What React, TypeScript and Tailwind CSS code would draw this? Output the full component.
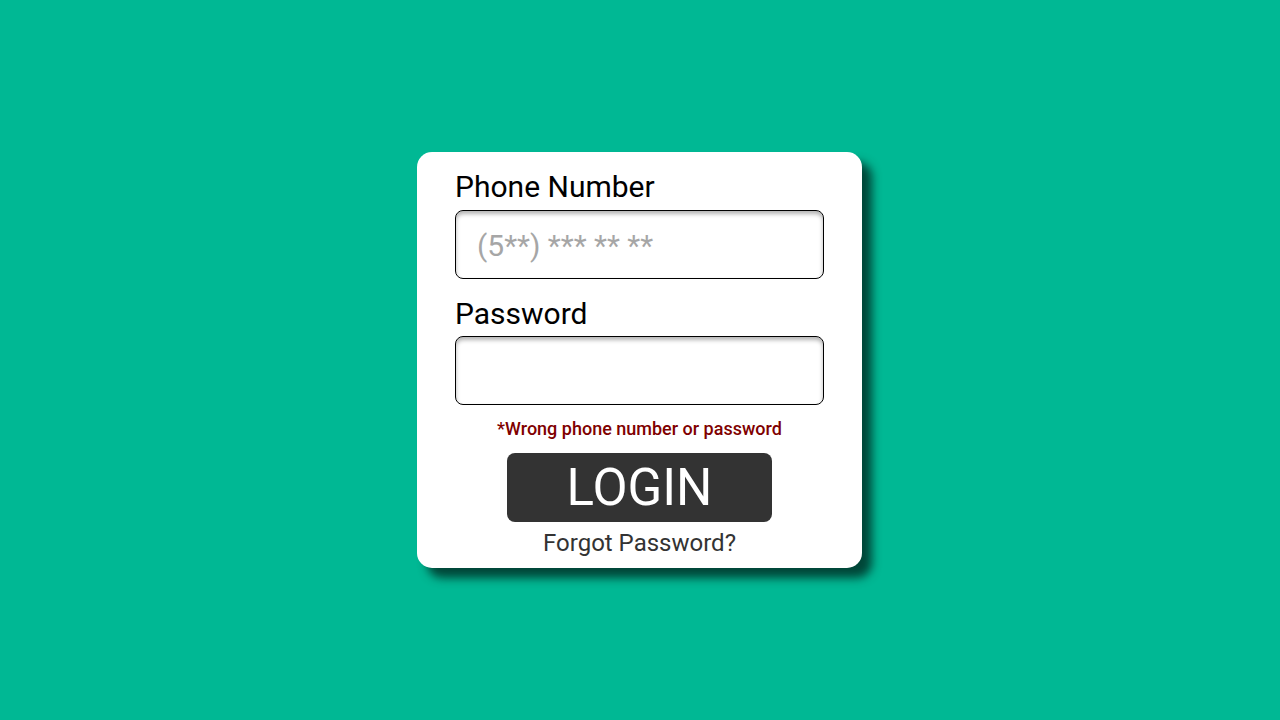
import { useState } from 'react';

export default function App() {
  const [phone, setPhone] = useState('');
  const [password, setPassword] = useState('');

  return (
    <div className="flex min-h-screen w-full items-center justify-center bg-[#00b894] font-['Roboto',_'Liberation_Sans',_sans-serif]">
      <div className="mr-px flex w-[445px] flex-col rounded-[15px] bg-white px-[38px] pt-[17px] pb-[11px] shadow-[10px_10px_10px_rgba(0,50,40,0.85)]">
        <label className="mb-[5px] h-[36px] text-[30px] leading-[36px] text-black">Phone Number</label>
        <input
          value={phone}
          onChange={(e) => setPhone(e.target.value)}
          placeholder="(5**) *** ** **"
          className="h-[69px] w-full rounded-[8px] border border-black bg-white pl-[21px] pt-px text-[30px] text-[#333] shadow-[inset_0_3px_4px_rgba(0,0,0,0.3)] outline-none placeholder:text-[#a6a6a6]"
        />

        <label className="mt-[17px] mb-[4px] h-[36px] text-[30px] leading-[36px] text-black">Password</label>
        <input
          type="password"
          value={password}
          onChange={(e) => setPassword(e.target.value)}
          className="h-[69px] w-full rounded-[8px] border border-black bg-white pl-[21px] text-[30px] text-[#333] shadow-[inset_0_3px_4px_rgba(0,0,0,0.3)] outline-none"
        />

        <p className="mt-[12px] h-[24px] text-center text-[18px] font-medium leading-[24px] text-[#800000]">
          *Wrong phone number or password
        </p>

        <button className="mx-auto mt-[12px] flex h-[69px] w-[265px] items-center justify-center rounded-[8px] bg-[#333333] text-[51px] leading-none text-white">
          LOGIN
        </button>

        <a className="mt-[7px] h-[28px] text-center text-[24px] leading-[28px] text-[#333333]">Forgot Password?</a>
      </div>
    </div>
  );
}
